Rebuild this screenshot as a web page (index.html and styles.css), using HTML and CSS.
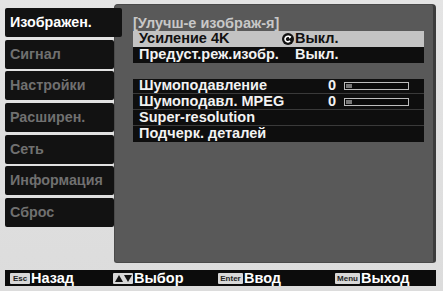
FILE: index.html
```html
<!DOCTYPE html>
<html lang="ru">
<head>
<meta charset="utf-8">
<link rel="stylesheet" href="styles.css">
</head>
<body>
<div class="screen">
  <div class="top">
    <div class="tabs">
      <div class="tab active">Изображен.</div>
      <div class="tab">Сигнал</div>
      <div class="tab">Настройки</div>
      <div class="tab">Расширен.</div>
      <div class="tab">Сеть</div>
      <div class="tab">Информация</div>
      <div class="tab">Сброс</div>
    </div>
    <div class="panel">
      <div class="title">[Улучш-е изображ-я]</div>
      <div class="group">
        <div class="row sel"><span class="label">Усиление 4K</span><span class="val icon-val"><svg class="ret" width="12" height="12" viewBox="0 0 11 11"><circle cx="5.5" cy="5.5" r="5.5" fill="#111"/><path d="M7.6 4.2 A2.6 2.6 0 1 0 7.4 7.2" fill="none" stroke="#fff" stroke-width="1.5"/><path d="M6 2.3 L8.6 3.2 L7 5.4 Z" fill="#fff"/></svg>Выкл.</span></div>
        <div class="row"><span class="label">Предуст.реж.изобр.</span><span class="val">Выкл.</span></div>
      </div>
      <div class="group group2">
        <div class="row line"><span class="label">Шумоподавление</span><span class="num">0</span><span class="bar"><span class="knob"></span></span></div>
        <div class="row line"><span class="label">Шумоподавл. MPEG</span><span class="num">0</span><span class="bar"><span class="knob"></span></span></div>
        <div class="row line"><span class="label">Super-resolution</span></div>
        <div class="row"><span class="label">Подчерк. деталей</span></div>
      </div>
    </div>
  </div>
  <div class="bottom">
    <div class="hint hint1"><span class="key k20">Esc</span>Назад</div>
    <div class="hint hint2"><span class="key k20 arrows"><span class="tri up"></span><span class="tri down"></span></span>Выбор</div>
    <div class="hint hint3"><span class="key k25">Enter</span>Ввод</div>
    <div class="hint hint4"><span class="key k25">Menu</span>Выход</div>
  </div>
</div>
</body>
</html>
```
FILE: styles.css
```css
* { box-sizing: border-box; }
html, body { margin: 0; padding: 0; }
body {
  width: 443px;
  height: 291px;
  overflow: hidden;
  background: linear-gradient(#e4e4e4, #dcdcdc);
  font-family: "Liberation Sans", Arial, sans-serif;
  font-weight: bold;
  font-size: 14.5px;
}
.screen {
  padding: 4px 7px 0 5px;
}
.top {
  display: flex;
  height: 259px;
}
.tabs {
  width: 109px;
  flex: none;
  display: flex;
  flex-direction: column;
  gap: 2.7px;
  padding-top: 4px;
}
.tab {
  height: 29px;
  line-height: 29px;
  background: #121212;
  border-radius: 2px;
  color: #707070;
  padding-left: 5px;
  font-size: 14.3px;
}
.tab.active {
  width: 117px;
  color: #fff;
  position: relative;
  z-index: 1;
}
.panel {
  flex: 1;
  background: #595959;
  border-radius: 4px 4px 3px 3px;
  border: 1px solid #4a4a4a;
  border-right: 3px solid #3c3c3c;
  padding: 10px 9px 0 18px;
}
.title {
  color: #c8c8c8;
  height: 16px;
  line-height: 16px;
}
.group {
  background: #0e0e0e;
}
.group2 {
  margin-top: 16px;
}
.row {
  height: 15.75px;
  line-height: 15.75px;
  display: flex;
  align-items: center;
  color: #f2f2f2;
  padding-left: 6px;
  white-space: nowrap;
}
.row.line {
  border-bottom: 1px solid #3a3a3a;
}
.row.sel {
  background: #c3c3c3;
  color: #111;
}
.label {
  width: 150px;
  flex: none;
}
.val {
  margin-left: 6px;
  display: flex;
  align-items: center;
}
.icon-val {
  margin-left: -7px;
}
.ret {
  margin-right: 1px;
}
.num {
  margin-left: 39px;
  width: 16px;
  flex: none;
}
.bar {
  width: 65px;
  flex: none;
  height: 8px;
  border: 1px solid #bdbdbd;
  background: #0a0a0a;
  display: flex;
  align-items: center;
  padding-left: 1px;
}
.knob {
  width: 6px;
  height: 4px;
  background: #777;
}
.bottom {
  margin-top: 7px;
  height: 16px;
  background: #0c0c0c;
  display: flex;
  align-items: center;
  color: #fff;
  padding-left: 5px;
}
.hint {
  display: flex;
  align-items: center;
  flex: none;
}
.hint1 { width: 103px; }
.hint2 { width: 105px; }
.hint3 { width: 117px; }
.key {
  background: #d8d8d8;
  color: #222;
  font-size: 8px;
  font-weight: bold;
  height: 11px;
  line-height: 11px;
  text-align: center;
  margin-right: 1px;
  border-radius: 1px;
  flex: none;
}
.k20 { width: 20px; }
.k25 { width: 25px; }
.arrows {
  display: flex;
  align-items: center;
  gap: 1px;
  justify-content: center;
}
.tri {
  width: 0;
  height: 0;
  border-left: 4px solid transparent;
  border-right: 4px solid transparent;
}
.tri.up { border-bottom: 7px solid #111; }
.tri.down { border-top: 7px solid #111; }
```
